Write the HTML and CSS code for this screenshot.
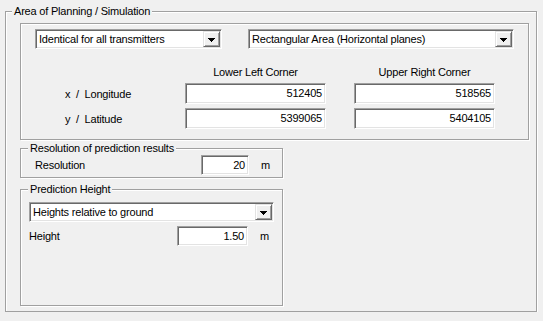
FILE: index.html
```html
<!DOCTYPE html>
<html lang="en">
<head>
    <meta charset="UTF-8">
    <title>Area of Planning / Simulation</title>
    <link rel="stylesheet" href="styles.css">
</head>
<body>
    <fieldset class="group outer">
        <legend>Area of Planning / Simulation</legend>

        <div class="area-box">
            <div class="combo-row">
                <div class="combo combo-mode">
                    <span class="combo-text">Identical for all transmitters</span>
                    <span class="drop"><svg width="7" height="4" viewBox="0 0 7 4" shape-rendering="crispEdges"><path d="M0 0h7v1h-1v1h-1v1h-1v1h-1v-1h-1v-1h-1v-1h-1z" fill="#000"/></svg></span>
                </div>
                <div class="combo combo-area">
                    <span class="combo-text">Rectangular Area (Horizontal planes)</span>
                    <span class="drop"><svg width="7" height="4" viewBox="0 0 7 4" shape-rendering="crispEdges"><path d="M0 0h7v1h-1v1h-1v1h-1v1h-1v-1h-1v-1h-1v-1h-1z" fill="#000"/></svg></span>
                </div>
            </div>

            <div class="coords">
                <span></span>
                <span class="col-head">Lower Left Corner</span>
                <span class="col-head">Upper Right Corner</span>

                <span class="coord-label">x  /  Longitude</span>
                <div class="field">512405</div>
                <div class="field">518565</div>

                <span class="coord-label">y  /  Latitude</span>
                <div class="field">5399065</div>
                <div class="field">5404105</div>
            </div>
        </div>

        <fieldset class="group small resolution">
            <legend>Resolution of prediction results</legend>
            <div class="field-row">
                <span class="row-label res-label">Resolution</span>
                <div class="field res-field">20</div>
                <span class="unit">m</span>
            </div>
        </fieldset>

        <fieldset class="group small height-box">
            <legend>Prediction Height</legend>
            <div class="combo combo-height">
                <span class="combo-text">Heights relative to ground</span>
                <span class="drop"><svg width="7" height="4" viewBox="0 0 7 4" shape-rendering="crispEdges"><path d="M0 0h7v1h-1v1h-1v1h-1v1h-1v-1h-1v-1h-1v-1h-1z" fill="#000"/></svg></span>
            </div>
            <div class="field-row height-row">
                <span class="row-label hgt-label">Height</span>
                <div class="field hgt-field">1.50</div>
                <span class="unit">m</span>
            </div>
        </fieldset>
    </fieldset>
</body>
</html>
```

FILE: styles.css
```css
body {
    margin: 0;
    background: #f0f0f0;
    font-family: "Liberation Sans", Arial, sans-serif;
    font-size: 11px;
    letter-spacing: -0.2px;
    color: #000;
}

/* etched group boxes */
.group {
    box-sizing: border-box;
    margin: 0;
    min-inline-size: 0;
    border: 1px solid #a0a0a0;
    box-shadow: 1px 1px 0 #fff, inset 1px 1px 0 #fff;
}

.group legend {
    padding: 0 2px;
    line-height: 13px;
    background: #f0f0f0;
}

.outer {
    margin: 5px 0 0 5px;
    width: 532px;
    height: 307px;
    padding: 0 8px 0 6px;
}

.area-box {
    box-sizing: border-box;
    margin: 5px 0 0 8px;
    width: 509px;
    height: 117px;
    padding: 5px 0 0 14px;
    border: 1px solid #a0a0a0;
    box-shadow: 1px 1px 0 #fff, inset 1px 1px 0 #fff;
}

.combo-row {
    display: flex;
    gap: 26px;
}

/* combo boxes */
.combo {
    box-sizing: border-box;
    display: flex;
    align-items: stretch;
    height: 20px;
    background: #fff;
    border: 1px solid;
    border-color: #a0a0a0 #fff #fff #a0a0a0;
    box-shadow: inset 1px 1px 0 #696969, inset -1px -1px 0 #e3e3e3;
    padding: 1px;
}

.combo-text {
    flex: 1;
    padding-left: 2px;
    line-height: 16px;
    white-space: nowrap;
    overflow: hidden;
}

.drop {
    box-sizing: border-box;
    width: 17px;
    display: flex;
    align-items: center;
    justify-content: center;
    background: #f0f0f0;
    border: 1px solid;
    border-color: #e3e3e3 #696969 #696969 #e3e3e3;
    box-shadow: inset 1px 1px 0 #fff, inset -1px -1px 0 #a0a0a0;
}

.drop svg {
    display: block;
    margin-top: 1px;
}

.combo-mode { width: 187px; }
.combo-area { width: 266px; }

/* coordinates grid */
.coords {
    display: grid;
    grid-template-columns: 92px 141px 141px;
    grid-template-rows: 13px 21px 21px;
    column-gap: 28px;
    row-gap: 4px;
    margin: 17px 0 0 30px;
}

.col-head {
    text-align: center;
    line-height: 13px;
}

.coord-label {
    align-self: center;
    white-space: pre;
}

/* sunken edit fields */
.field {
    box-sizing: border-box;
    height: 21px;
    background: #fff;
    border: 1px solid;
    border-color: #a0a0a0 #fff #fff #a0a0a0;
    box-shadow: inset 1px 1px 0 #696969, inset -1px -1px 0 #e3e3e3;
    text-align: right;
    padding-right: 3px;
    line-height: 19px;
}

.small {
    margin-left: 8px;
    width: 263px;
    padding: 0 8px;
}

.small legend {
    margin-left: -1px;
}

.resolution {
    margin-top: 2px;
    height: 36px;
}

.height-box {
    margin-top: 5px;
    height: 123px;
}

.field-row {
    display: flex;
    align-items: center;
}

.res-label {
    margin-left: 6px;
    width: 166px;
}

.res-field {
    width: 48px;
    height: 20px;
    line-height: 18px;
}

.hgt-label {
    width: 148px;
}

.hgt-field {
    width: 71px;
    height: 20px;
    line-height: 18px;
}

.unit {
    margin-left: 12px;
}

.combo-height {
    width: 245px;
    margin-top: 6px;
}

.height-row {
    margin-top: 4px;
}
```
